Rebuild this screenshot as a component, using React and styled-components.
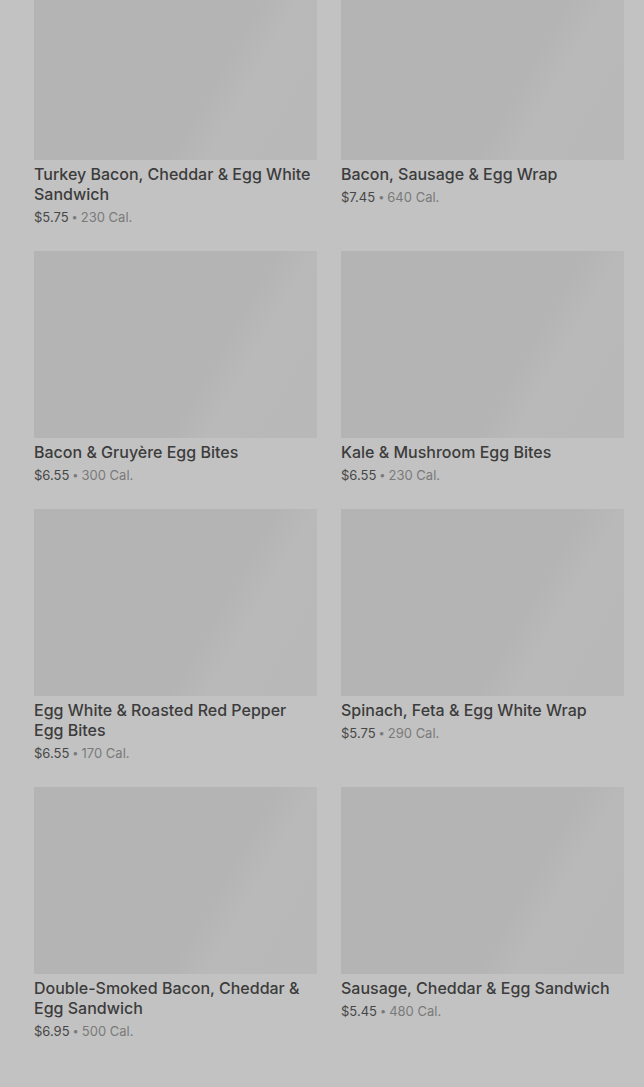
import React from "react";
import styled, { createGlobalStyle } from "styled-components";

const items = [
  { name: "Turkey Bacon, Cheddar & Egg White Sandwich", price: "$5.75", cal: "230 Cal." },
  { name: "Bacon, Sausage & Egg Wrap", price: "$7.45", cal: "640 Cal." },
  { name: "Bacon & Gruyère Egg Bites", price: "$6.55", cal: "300 Cal." },
  { name: "Kale & Mushroom Egg Bites", price: "$6.55", cal: "230 Cal." },
  { name: "Egg White & Roasted Red Pepper Egg Bites", price: "$6.55", cal: "170 Cal." },
  { name: "Spinach, Feta & Egg White Wrap", price: "$5.75", cal: "290 Cal." },
  { name: "Double-Smoked Bacon, Cheddar & Egg Sandwich", price: "$6.95", cal: "500 Cal." },
  { name: "Sausage, Cheddar & Egg Sandwich", price: "$5.45", cal: "480 Cal." },
];

const App = () => {
  const cards = items.map((item) => (
    <Card key={item.name}>
      <Thumb />
      <Title>{item.name}</Title>
      <Meta>
        <Price>{item.price}</Price>
        <Dot>•</Dot>
        <Cal>{item.cal}</Cal>
      </Meta>
    </Card>
  ));
  return (
    <>
      <GlobalStyle />
      <Page>
        <Grid>{cards}</Grid>
      </Page>
    </>
  );
};

const GlobalStyle = createGlobalStyle`
  html, body {
    margin: 0;
    padding: 0;
    background: #c2c2c2;
    overflow: hidden;
  }
  body {
    font-family: Inter, "Noto Sans", sans-serif;
    -webkit-font-smoothing: antialiased;
  }
`;

const Page = styled.div`
  width: 644px;
  height: 1087px;
  overflow: hidden;
  background: #c2c2c2;
`;

const Grid = styled.div`
  display: grid;
  grid-template-columns: 283px 283px;
  column-gap: 24px;
  row-gap: 24px;
  padding: 0 20px 0 34px;
  margin-top: -27px;
`;

const Card = styled.div`
  display: flex;
  flex-direction: column;
`;

const Thumb = styled.div`
  height: 187px;
  background: linear-gradient(120deg, #b4b4b4 0%, #b4b4b4 62%, #b9b9b9 72%, #b8b8b8 100%);
`;

const Title = styled.div`
  margin-top: 4px;
  font-size: 16px;
  line-height: 20px;
  font-weight: 500;
  color: #3c3c3c;
`;

const Meta = styled.div`
  display: flex;
  align-items: center;
  gap: 3px;
  margin-top: 3px;
  font-size: 13px;
  line-height: 20px;
`;

const Price = styled.span`
  color: #474747;
`;

const Dot = styled.span`
  color: #7a7a7a;
  font-size: 11px;
`;

const Cal = styled.span`
  color: #7a7a7a;
`;

export default App;
